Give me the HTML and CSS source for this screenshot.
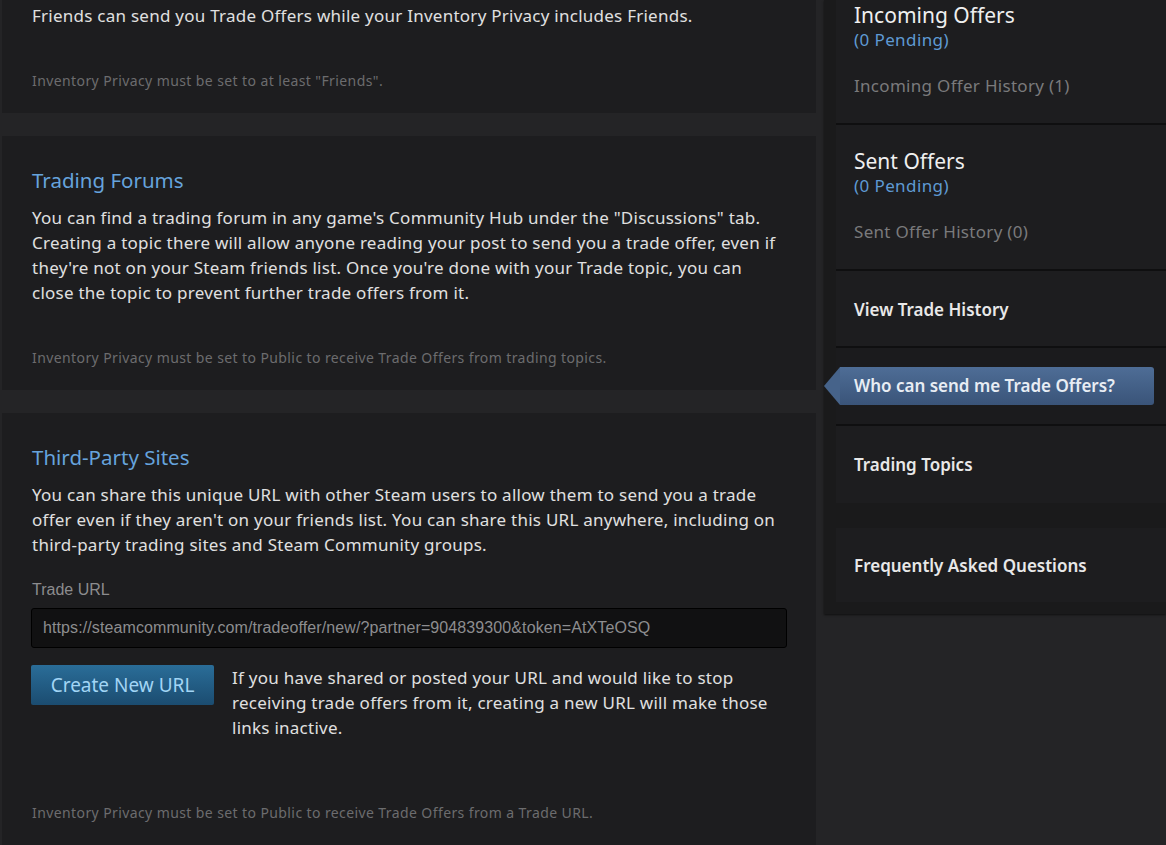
FILE: index.html
```html
<!DOCTYPE html>
<html lang="en">

<head>
    <meta charset="UTF-8" />
    <meta name="viewport" content="width=device-width, initial-scale=1.0" />
    <title>Trade Offers</title>
    <link rel="stylesheet" href="styles.css">
</head>

<body>

    <div class="page">

        <!-- Cột trái: các mục -->
        <div class="main">

            <div class="panel panel-top">
                <p class="desc">Friends can send you Trade Offers while your Inventory Privacy includes Friends.</p>
                <p class="note">Inventory Privacy must be set to at least "Friends".</p>
            </div>

            <div class="panel">
                <h2>Trading Forums</h2>
                <p class="desc">You can find a trading forum in any game's Community Hub under the "Discussions" tab.<br>
                    Creating a topic there will allow anyone reading your post to send you a trade offer, even if<br>
                    they're not on your Steam friends list. Once you're done with your Trade topic, you can<br>
                    close the topic to prevent further trade offers from it.</p>
                <p class="note">Inventory Privacy must be set to Public to receive Trade Offers from trading topics.</p>
            </div>

            <div class="panel panel-last">
                <h2>Third-Party Sites</h2>
                <p class="desc">You can share this unique URL with other Steam users to allow them to send you a trade<br>
                    offer even if they aren't on your friends list. You can share this URL anywhere, including on<br>
                    third-party trading sites and Steam Community groups.</p>

                <div class="label">Trade URL</div>
                <input class="trade-url" type="text" readonly
                    value="https://steamcommunity.com/tradeoffer/new/?partner=904839300&amp;token=AtXTeOSQ">

                <div class="url-row">
                    <button class="btn-blue">Create New URL</button>
                    <p class="desc">If you have shared or posted your URL and would like to stop<br>
                        receiving trade offers from it, creating a new URL will make those<br>
                        links inactive.</p>
                </div>

                <p class="note">Inventory Privacy must be set to Public to receive Trade Offers from a Trade URL.</p>
            </div>

        </div>

        <!-- Cột phải: menu -->
        <div class="side">
            <div class="side-item side-first">
                <div class="side-title">Incoming Offers</div>
                <div class="pending">(0 Pending)</div>
                <div class="history">Incoming Offer History (1)</div>
            </div>

            <div class="side-item">
                <div class="side-title">Sent Offers</div>
                <div class="pending">(0 Pending)</div>
                <div class="history">Sent Offer History (0)</div>
            </div>

            <div class="side-item side-link">View Trade History</div>

            <div class="side-item side-sel">
                <div class="selected">Who can send me Trade Offers?</div>
            </div>

            <div class="side-item side-link no-line">Trading Topics</div>

            <div class="side-item side-link side-faq no-line">Frequently Asked Questions</div>
        </div>

    </div>

</body>

</html>
```

FILE: styles.css
```css
* {
    box-sizing: border-box;
}

body {
    margin: 0;
    background-color: #242426;
    font-family: "Noto Sans", "Open Sans", sans-serif;
    overflow: hidden;
    height: 845px;
}

.page {
    display: flex;
    align-items: flex-start;
}

.main {
    width: 816px;
    padding-left: 2px;
    display: flex;
    flex-direction: column;
    gap: 23px;
}

.panel {
    background-color: #1d1d1f;
    padding: 30px 20px 22px 30px;
}

.panel-top {
    padding-top: 3px;
}

.panel-last {
    min-height: 440px;
}

h2 {
    margin: 0 0 11px 0;
    font-size: 20.5px;
    line-height: 28px;
    font-weight: normal;
    color: #66a3dc;
}

.desc {
    margin: 0;
    font-size: 17px;
    line-height: 25px;
    letter-spacing: 0.25px;
    color: #e0e0e0;
    white-space: nowrap;
}

.note {
    margin: 43px 0 0 0;
    font-size: 14px;
    line-height: 20px;
    letter-spacing: 0.4px;
    color: #6c6c6e;
}

.label {
    margin-top: 23px;
    font-family: "Liberation Sans", Arial, sans-serif;
    font-size: 16px;
    line-height: 20px;
    color: #8c8c8e;
}

.trade-url {
    display: block;
    width: 756px;
    height: 40px;
    margin: 8px 0 0 -1px;
    padding: 0 11px;
    background-color: #111112;
    border: 1px solid #000;
    border-radius: 3px;
    font-family: "Liberation Sans", Arial, sans-serif;
    font-size: 16px;
    letter-spacing: 0.1px;
    color: #8d8d8f;
    outline: none;
}

.url-row {
    display: flex;
    align-items: flex-start;
    gap: 18px;
    margin-top: 17px;
}

.btn-blue {
    flex: none;
    width: 183px;
    height: 40px;
    margin-left: -1px;
    border: none;
    border-radius: 2px;
    background: linear-gradient(to bottom, #2a6d98, #1b4c70);
    color: #a2d5f5;
    font-family: "Noto Sans", "Open Sans", sans-serif;
    font-size: 19px;
    cursor: pointer;
}

.panel-last .note {
    margin-top: 63px;
}

/* Sidebar */
.side {
    width: 342px;
    margin-left: 8px;
    padding: 0 0 12px 12px;
    background-color: #1a1a1b;
    box-shadow: 0 1px 2px rgba(0, 0, 0, 0.6);
}

.side-item {
    background-color: #1d1d1f;
    padding: 23px 18px 25px 18px;
    border-bottom: 2px solid #0f0f10;
}

.side-first {
    padding-top: 2px;
}

.side-title {
    font-size: 21px;
    line-height: 26px;
    color: #efefef;
}

.pending {
    font-size: 17px;
    line-height: 24px;
    letter-spacing: 0.4px;
    color: #5f9ad3;
}

.history {
    margin-top: 21px;
    font-size: 17px;
    line-height: 25px;
    letter-spacing: 0.3px;
    color: #7a7a7c;
}

.side-link {
    height: 77px;
    padding-top: 26px;
    font-size: 17px;
    line-height: 25px;
    font-weight: 600;
    color: #e8e8e8;
}

.side-sel {
    height: 78px;
    padding: 19px 12px 0 0;
    background-color: #1b1b1d;
}

.selected {
    position: relative;
    height: 38px;
    margin-left: 4px;
    padding-left: 14px;
    line-height: 38px;
    font-size: 17px;
    font-weight: 600;
    color: #e8edf4;
    background: linear-gradient(to bottom, #4e6d96, #3a5479);
    border-radius: 0 3px 3px 0;
}

.selected::before {
    content: "";
    position: absolute;
    left: -16px;
    top: 0;
    border-top: 19px solid transparent;
    border-bottom: 19px solid transparent;
    border-right: 16px solid #46638a;
}

.no-line {
    border-bottom: none;
}

.side-faq {
    height: 74px;
    margin-top: 25px;
    padding-top: 25px;
}
```
